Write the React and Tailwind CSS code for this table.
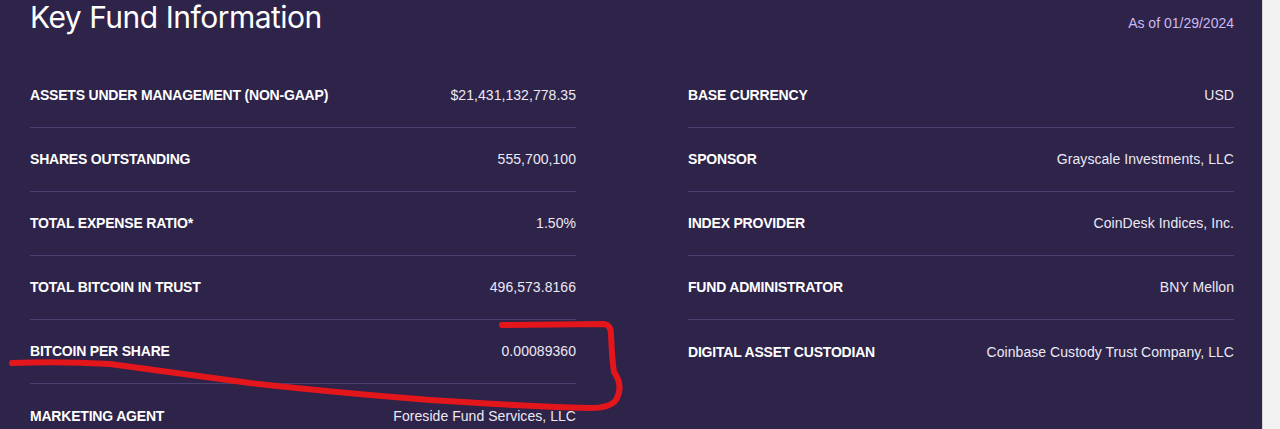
import React from 'react';

const left = [
  ['ASSETS UNDER MANAGEMENT (NON-GAAP)', '$21,431,132,778.35'],
  ['SHARES OUTSTANDING', '555,700,100'],
  ['TOTAL EXPENSE RATIO*', '1.50%'],
  ['TOTAL BITCOIN IN TRUST', '496,573.8166'],
  ['BITCOIN PER SHARE', '0.00089360'],
  ['MARKETING AGENT', 'Foreside Fund Services, LLC'],
];

const right = [
  ['BASE CURRENCY', 'USD'],
  ['SPONSOR', 'Grayscale Investments, LLC'],
  ['INDEX PROVIDER', 'CoinDesk Indices, Inc.'],
  ['FUND ADMINISTRATOR', 'BNY Mellon'],
  ['DIGITAL ASSET CUSTODIAN', 'Coinbase Custody Trust Company, LLC'],
];

function Row({ label, value, last }) {
  return (
    <div
      className={
        'flex h-[64px] items-center justify-between ' +
        (last ? '' : 'border-b border-[#4b4170]')
      }
    >
      <span className="font-['Liberation_Sans',sans-serif] text-[14px] font-bold tracking-[-0.2px] text-white">
        {label}
      </span>
      <span className="font-['Liberation_Sans',sans-serif] text-[14px] tracking-[0.05px] text-[#ece9f4]">
        {value}
      </span>
    </div>
  );
}

export default function App() {
  return (
    <div className="relative flex h-[429px] w-[1280px] overflow-hidden bg-[#f2f2f2]">
      <div className="w-[1262px] shrink-0 bg-[#2e2349] pl-[30px] pr-[28px]">
        <div className="flex h-[64px] items-start justify-between">
          <h1 className="-mt-[1px] font-['Inter',sans-serif] text-[30px] leading-[36px] tracking-[-0.5px] text-white">
            Key Fund Information
          </h1>
          <span className="mt-[13px] font-['Liberation_Sans',sans-serif] text-[14px] text-[#c9baf2]">
            As of 01/29/2024
          </span>
        </div>
        <div className="flex gap-[112px]">
          <div className="w-[546px]">
            {left.map(([l, v], i) => (
              <Row key={l} label={l} value={v} last={i === left.length - 1} />
            ))}
          </div>
          <div className="w-[546px]">
            {right.map(([l, v], i) => (
              <Row key={l} label={l} value={v} last={i === right.length - 1} />
            ))}
          </div>
        </div>
      </div>
      <div className="w-px bg-[#d4d4d4]" />
      <svg
        className="pointer-events-none absolute left-0 top-0"
        width="1280"
        height="429"
        viewBox="0 0 1280 429"
      >
        <path
          d="M502 325 L604 324 Q611 325 611 334 Q612 360 614 372 Q624 386 616 400 Q610 408 590 408 Q520 406 430 400 Q330 392 250 383 Q170 372 110 364 Q60 361 12 363"
          fill="none"
          stroke="#e3161b"
          strokeWidth="6"
          strokeLinecap="round"
          strokeLinejoin="round"
        />
      </svg>
    </div>
  );
}
